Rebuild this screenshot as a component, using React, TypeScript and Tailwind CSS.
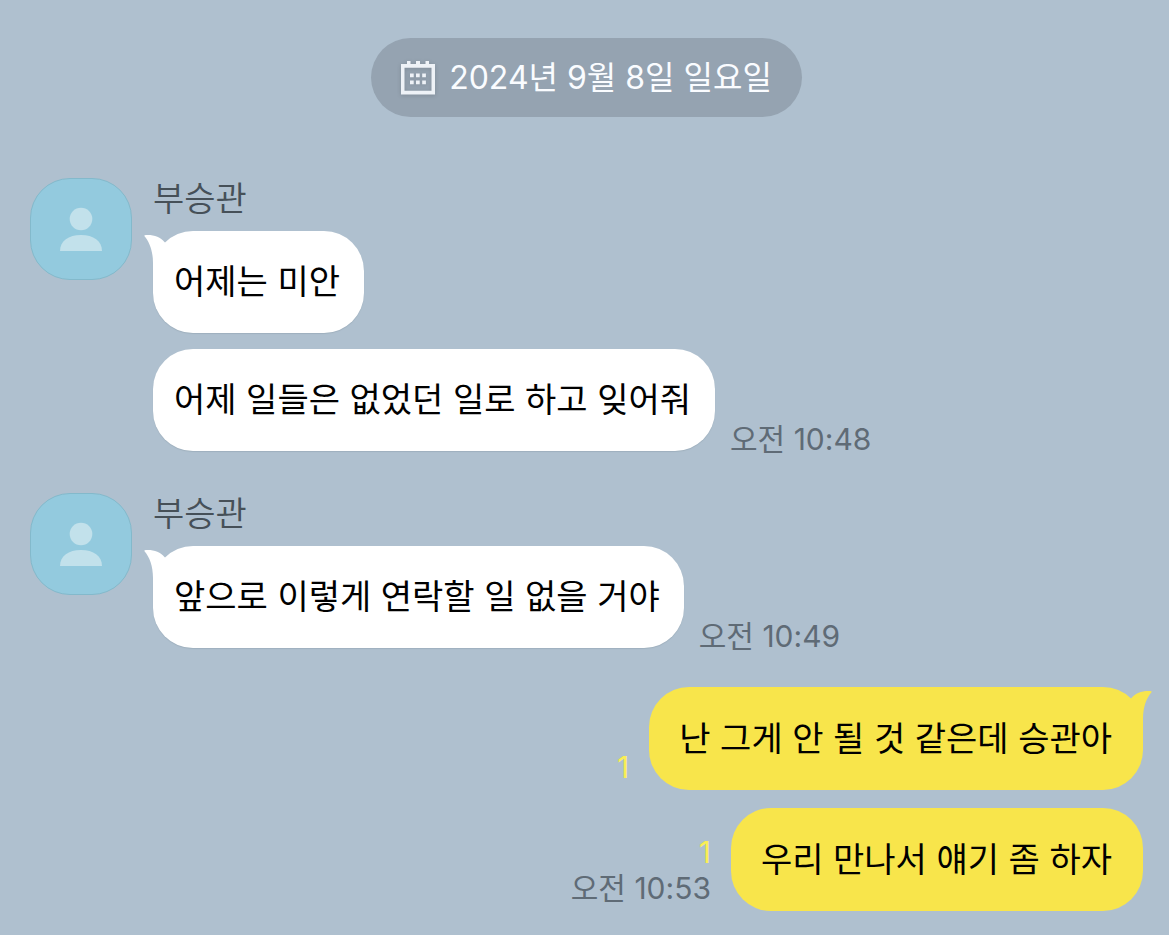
import clsx from "clsx";

type Side = "left" | "right";

interface Message {
  text: string;
  time?: string;
  unread?: number;
}

interface MessageGroup {
  sender?: string;
  side: Side;
  messages: Message[];
}

const GROUPS: MessageGroup[] = [
  {
    sender: "부승관",
    side: "left",
    messages: [
      { text: "어제는 미안" },
      { text: "어제 일들은 없었던 일로 하고 잊어줘", time: "10:48" },
    ],
  },
  {
    sender: "부승관",
    side: "left",
    messages: [{ text: "앞으로 이렇게 연락할 일 없을 거야", time: "10:49" }],
  },
  {
    side: "right",
    messages: [
      { text: "난 그게 안 될 것 같은데 승관아", unread: 1 },
      { text: "우리 만나서 얘기 좀 하자", unread: 1, time: "10:53" },
    ],
  },
];

function CalendarIcon() {
  return (
    <svg width="34" height="34" viewBox="0 0 34 34" fill="#eef2f7" className="shrink-0 drop-shadow-sm" aria-hidden>
      <path fillRule="evenodd" d="M0 3h6V0h3.5v3H15V0h4v3h5.500V0H28v3h6v30.5H0ZM3.5 6.8v23h27v-23Z" />
      <path d="M9 12.500h3.7v3.7H9ZM15 12.500h3.7v3.7H15ZM21.200 12.500h3.7v3.7h-3.7ZM9 19.500h3.7v3.7H9ZM15 19.500h3.7v3.7H15ZM21.200 19.500h3.7v3.7h-3.7Z" />
    </svg>
  );
}

function DatePill() {
  return (
    <div className="flex items-center gap-[14px] rounded-full bg-[#95a3b1] px-[30px] py-[17px]">
      <CalendarIcon />
      <time dateTime="2024-09-08" className="text-[32px] leading-[45px] text-[#fafcff]">
        2024년 9월 8일 일요일
      </time>
    </div>
  );
}

function Avatar() {
  return (
    <div className="size-[102px] shrink-0 rounded-[40px] border border-[#83b9cb] bg-[#93cade]">
      <svg viewBox="0 0 100 100" fill="#c2e1eb" className="size-full" aria-hidden>
        <circle cx="50" cy="40" r="11.3" />
        <path d="M29 72C29 62 37.5 56 50 56s21 6 21 16Z" />
      </svg>
    </div>
  );
}

function Tail({ side }: { side: Side }) {
  return (
    <svg
      width="30"
      height="40"
      viewBox="0 0 30 40"
      className={clsx(
        "absolute top-0",
        side === "left" ? "-left-[9px] text-white" : "-right-[9px] -scale-x-100 text-[#f8e54b]",
      )}
      fill="currentColor"
      aria-hidden
    >
      <path d="M0.5 4.3C9 3.4 16 6 20.7 11.2L30 22V40H9V32C9 20 5.5 11 0.5 5.2Z" />
    </svg>
  );
}

function Bubble({ text, side, tail }: { text: string; side: Side; tail: boolean }) {
  return (
    <p
      className={clsx(
        "relative rounded-[40px] py-6 text-[34px] text-black",
        side === "left"
          ? "bg-white pr-6 pl-[21px] leading-[54px] shadow-[0_1px_1px_#9fb0be]"
          : "bg-[#f8e54b] pr-[31px] pl-[30px] leading-[55px]",
      )}
    >
      {tail && <Tail side={side} />}
      {text}
    </p>
  );
}

function MessageMeta({ message, side }: { message: Message; side: Side }) {
  if (!message.time && !message.unread) return null;

  return (
    <div
      className={clsx(
        "flex shrink-0 flex-col items-end text-[30px]",
        side === "left" ? "leading-6" : "pb-[5px] leading-9",
      )}
    >
      {message.unread && <span className="text-[#faee55]">{message.unread}</span>}
      {message.time && (
        <time dateTime={message.time} className="text-[#5f6b76]">
          오전 {message.time}
        </time>
      )}
    </div>
  );
}

function MessageList({ group }: { group: MessageGroup }) {
  const { side, messages } = group;

  return (
    <ul className={clsx("flex flex-col", side === "left" ? "items-start gap-4" : "items-end gap-[18px]")}>
      {messages.map((message, index) => (
        <li
          key={message.text}
          className={clsx("flex items-end", side === "left" ? "gap-[15px]" : "flex-row-reverse gap-5")}
        >
          <Bubble text={message.text} side={side} tail={index === 0} />
          <MessageMeta message={message} side={side} />
        </li>
      ))}
    </ul>
  );
}

export default function App() {
  return (
    <main className="min-h-screen bg-[#afc0cf] pt-[38px] pr-[26px] pb-6 pl-[30px] font-[Inter,'Noto_Sans_CJK_KR',sans-serif]">
      <div className="mb-[61px] flex justify-center">
        <DatePill />
      </div>
      {GROUPS.map((group, index) =>
        group.side === "left" ? (
          <section key={index} className="flex items-start gap-[21px] not-first:mt-[42px]">
            <Avatar />
            <div className="flex-1">
              <h2 className="mb-[11px] text-[34px] leading-[42px] font-[350] text-[#465058]">{group.sender}</h2>
              <MessageList group={group} />
            </div>
          </section>
        ) : (
          <section key={index} className="mt-[39px]">
            <MessageList group={group} />
          </section>
        ),
      )}
    </main>
  );
}
